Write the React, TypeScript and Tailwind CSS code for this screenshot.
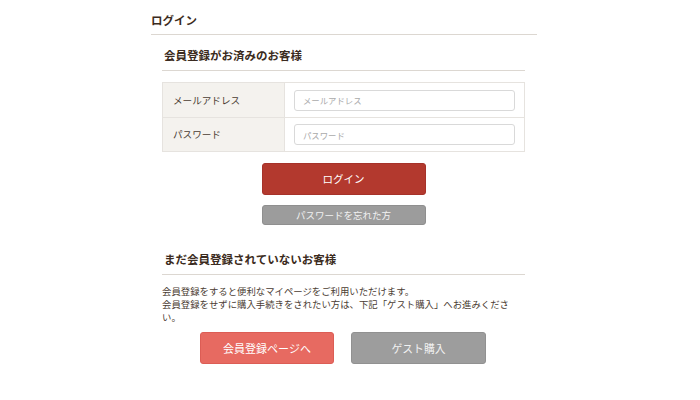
export default function App() {
  return (
    <div className="min-h-[400px] w-[700px] bg-white font-['Noto_Sans_CJK_JP','Noto_Sans',sans-serif] text-[#3b2b20]">
      <div className="ml-[151px] w-[386px]">
        <h1 className="border-b border-[#dcd7d1] pb-[6px] pt-[12px] text-[11.5px] font-bold leading-[16px]">
          ログイン
        </h1>

        <div className="ml-[11px] mr-[12px]">
          <h2 className="border-b border-[#dcd7d1] pb-[7px] pt-[12px] pl-[2px] text-[11.5px] font-bold leading-[16px]">
            会員登録がお済みのお客様
          </h2>

          <div className="mt-[11px] border border-[#e6e3df]">
            {[
              { label: "メールアドレス", type: "email" },
              { label: "パスワード", type: "password" },
            ].map((row, i) => (
              <div
                key={row.label}
                className={`flex h-[34px] ${i > 0 ? "border-t border-[#e6e3df]" : ""}`}
              >
                <div className="flex w-[122px] items-center border-r border-[#e6e3df] bg-[#f4f2ee] pl-[10px] text-[9.6px] text-[#4a3c32]">
                  {row.label}
                </div>
                <div className="flex flex-1 items-center px-[9px]">
                  <input
                    type={row.type}
                    placeholder={row.label}
                    className="h-[21px] w-full rounded-[3px] border border-[#d9d9d9] bg-white px-[8px] text-[8.4px] outline-none placeholder:text-[#aaa]"
                  />
                </div>
              </div>
            ))}
          </div>

          <div className="flex flex-col items-center">
            <button className="mt-[11px] h-[32px] w-[164px] rounded-[3px] border border-[#a6322a] bg-[#b3392e] text-[10.5px] text-white">
              ログイン
            </button>
            <button className="mt-[10px] h-[20px] w-[164px] rounded-[3px] border border-[#8f8f8f] bg-[#9c9c9c] text-[9.5px] text-[#f2f2f2]">
              パスワードを忘れた方
            </button>
          </div>

          <h2 className="mt-[26px] border-b border-[#dcd7d1] pb-[7px] pl-[2px] text-[11.5px] font-bold leading-[16px]">
            まだ会員登録されていないお客様
          </h2>

          <p className="mt-[10px] text-[9.4px] leading-[13px] text-[#4a3c32]">
            会員登録をすると便利なマイページをご利用いただけます。
            <br />
            会員登録をせずに購入手続きをされたい方は、下記「ゲスト購入」へお進みください。
          </p>

          <div className="mt-[8px] flex justify-center gap-[17px] pr-[1px]">
            <button className="h-[32px] w-[134px] rounded-[3px] border border-[#dc5d55] bg-[#e76a61] text-[11px] text-white">
              会員登録ページへ
            </button>
            <button className="h-[32px] w-[135px] rounded-[3px] border border-[#919191] bg-[#9d9d9d] text-[10.8px] text-[#f2f2f2]">
              ゲスト購入
            </button>
          </div>
        </div>
      </div>
    </div>
  );
}
